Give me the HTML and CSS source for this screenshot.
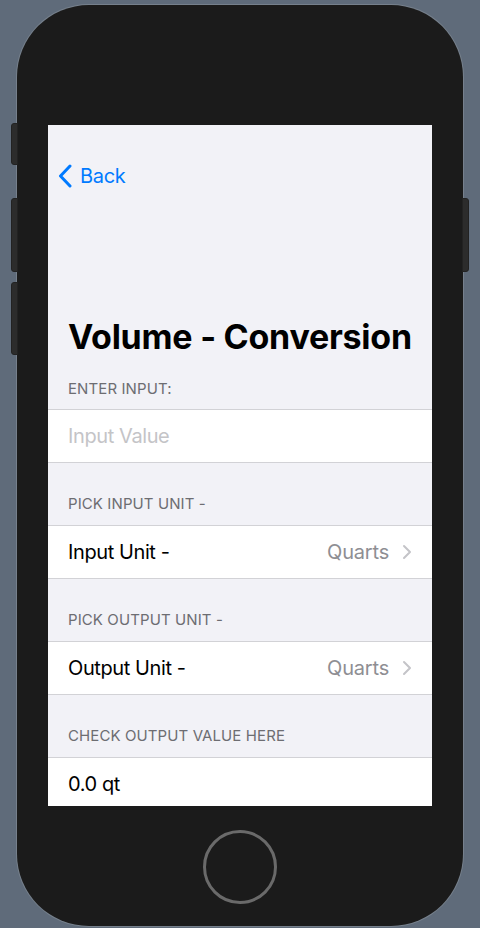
FILE: index.html
```html
<!DOCTYPE html>
<html lang="en">
<head>
<meta charset="utf-8">
<title>Volume - Conversion</title>
<link rel="stylesheet" href="styles.css">
</head>
<body>
<div class="phone">
  <span class="side-btn btn-mute"></span>
  <span class="side-btn btn-vol-up"></span>
  <span class="side-btn btn-vol-down"></span>
  <span class="side-btn btn-power"></span>
  <div class="screen">
    <div class="nav">
      <svg class="back-chevron" width="14" height="24" viewBox="0 0 14 24" aria-hidden="true">
        <path d="M12 2 L2.5 12 L12 22" fill="none" stroke="#007aff" stroke-width="3" stroke-linecap="round" stroke-linejoin="round"/>
      </svg>
      <span class="back-label">Back</span>
    </div>
    <h1 class="title">Volume - Conversion</h1>
    <div class="header first">ENTER INPUT:</div>
    <div class="row"><span class="placeholder">Input Value</span></div>
    <div class="header">PICK INPUT UNIT -</div>
    <div class="row">
      <span class="label">Input Unit -</span>
      <span class="detail">Quarts
        <svg class="chev" width="10" height="16" viewBox="0 0 10 16" aria-hidden="true"><path d="M2 2 L8 8 L2 14" fill="none" stroke="#c4c4c8" stroke-width="2" stroke-linecap="round" stroke-linejoin="round"/></svg>
      </span>
    </div>
    <div class="header">PICK OUTPUT UNIT -</div>
    <div class="row">
      <span class="label">Output Unit -</span>
      <span class="detail">Quarts
        <svg class="chev" width="10" height="16" viewBox="0 0 10 16" aria-hidden="true"><path d="M2 2 L8 8 L2 14" fill="none" stroke="#c4c4c8" stroke-width="2" stroke-linecap="round" stroke-linejoin="round"/></svg>
      </span>
    </div>
    <div class="header">CHECK OUTPUT VALUE HERE</div>
    <div class="row"><span class="label">0.0 qt</span></div>
  </div>
  <div class="home"><span class="home-ring"></span></div>
</div>
</body>
</html>
```
FILE: styles.css
```css
* { box-sizing: border-box; }
html, body { margin: 0; padding: 0; }
body {
  width: 480px;
  height: 928px;
  background: #5f6b7a;
  padding: 5px 0 0 17px;
  overflow: hidden;
  font-family: "Inter", "Liberation Sans", sans-serif;
}
.phone {
  position: relative;
  width: 446px;
  height: 921px;
  background: #1b1b1b;
  border-radius: 72px;
  box-shadow: 0 0 0 1px #76808c;
  padding: 120px 31px 0 31px;
  display: flex;
  flex-direction: column;
}
.side-btn {
  position: absolute;
  width: 7px;
  background: #2c2c2c;
  border: 1px solid #222;
}
.btn-mute { left: -6px; top: 118px; height: 42px; border-radius: 3px 0 0 3px; }
.btn-vol-up { left: -6px; top: 193px; height: 74px; border-radius: 3px 0 0 3px; }
.btn-vol-down { left: -6px; top: 277px; height: 73px; border-radius: 3px 0 0 3px; }
.btn-power { right: -6px; top: 193px; height: 74px; border-radius: 0 3px 3px 0; }

.screen {
  flex: none;
  width: 384px;
  height: 681px;
  background: #f2f2f7;
  overflow: hidden;
  display: flex;
  flex-direction: column;
}
.screen > * { flex: none; }
.nav {
  margin-top: 29px;
  height: 44px;
  display: flex;
  align-items: center;
  padding-left: 10px;
  gap: 8px;
  color: #007aff;
}
.back-chevron { display: block; }
.back-label { font-size: 20px; letter-spacing: -0.3px; }
.title {
  margin: 118px 0 0 0;
  padding: 0 0 0 20px;
  font-size: 34px;
  line-height: 41px;
  font-weight: 700;
  color: #000;
  letter-spacing: -0.25px;
  white-space: nowrap;
}
.header {
  padding: 32px 20px 12px 20px;
  font-size: 15px;
  line-height: 18px;
  color: #6d6d72;
  letter-spacing: 0.1px;
  white-space: nowrap;
}
.header.first { padding-top: 23px; padding-bottom: 11px; }
.row {
  height: 54px;
  background: #fff;
  border-top: 1px solid #d2d2d6;
  border-bottom: 1px solid #d2d2d6;
  display: flex;
  align-items: center;
  justify-content: space-between;
  padding: 0 20px;
  font-size: 20px;
  letter-spacing: -0.4px;
}
.label { color: #000; }
.placeholder { color: #c4c4c7; }
.detail {
  color: #8e8e93;
  display: flex;
  align-items: center;
  gap: 13px;
  letter-spacing: -0.2px;
}
.chev { display: block; }
.home {
  flex: 1;
  display: flex;
  justify-content: center;
  padding-top: 24px;
}
.home-ring {
  width: 74px;
  height: 74px;
  border-radius: 50%;
  border: 3px solid #6a6a6a;
}
```
